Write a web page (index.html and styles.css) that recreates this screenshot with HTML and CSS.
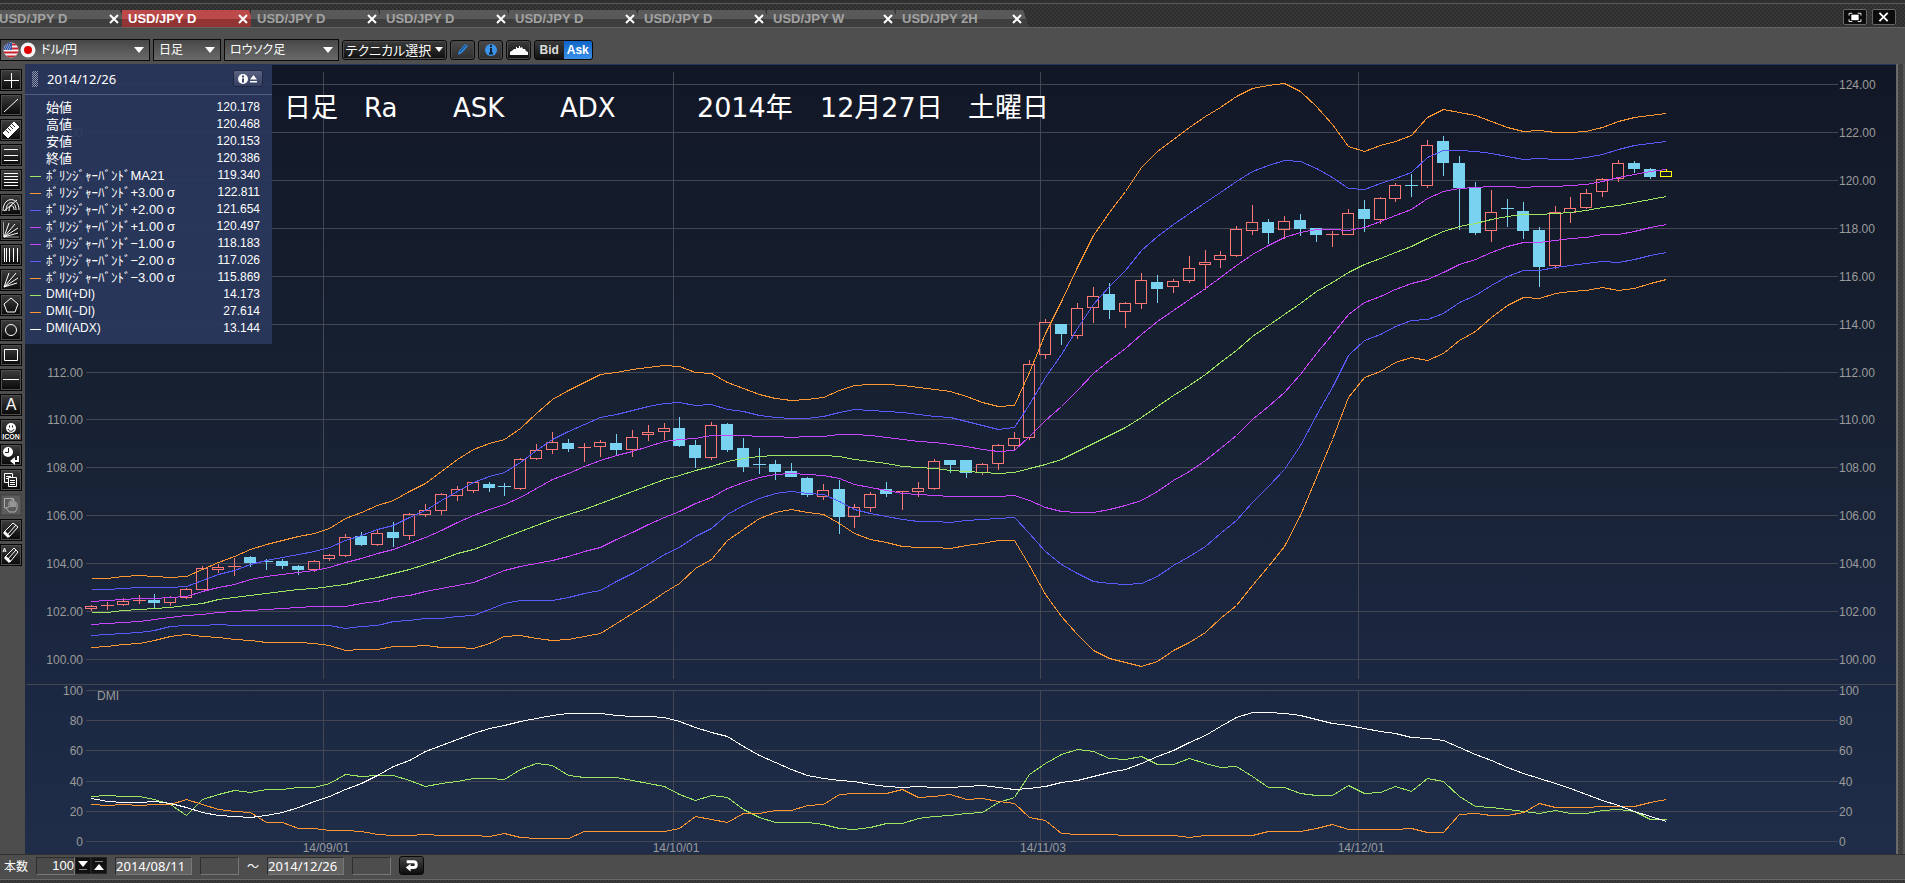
FILE: index.html
```
<!DOCTYPE html>
<html lang="ja">
<head>
  <meta charset="UTF-8">
  <meta name="viewport" content="width=device-width, initial-scale=1.0">
  <title>USD/JPY D</title>
  <link rel="stylesheet" href="styles.css">
</head>
<body>
  <div class="frame-top"></div>
  <header class="tab-bar">
    <ul class="tabs">
      <li class="tab"><button class="tab-name">USD/JPY D</button><button class="tab-close" aria-label="閉じる"><svg viewBox="0 0 10 10"><path d="M1 1l8 8M9 1l-8 8"/></svg></button></li>
      <li class="tab active"><button class="tab-name">USD/JPY D</button><button class="tab-close" aria-label="閉じる"><svg viewBox="0 0 10 10"><path d="M1 1l8 8M9 1l-8 8"/></svg></button></li>
      <li class="tab"><button class="tab-name">USD/JPY D</button><button class="tab-close" aria-label="閉じる"><svg viewBox="0 0 10 10"><path d="M1 1l8 8M9 1l-8 8"/></svg></button></li>
      <li class="tab"><button class="tab-name">USD/JPY D</button><button class="tab-close" aria-label="閉じる"><svg viewBox="0 0 10 10"><path d="M1 1l8 8M9 1l-8 8"/></svg></button></li>
      <li class="tab"><button class="tab-name">USD/JPY D</button><button class="tab-close" aria-label="閉じる"><svg viewBox="0 0 10 10"><path d="M1 1l8 8M9 1l-8 8"/></svg></button></li>
      <li class="tab"><button class="tab-name">USD/JPY D</button><button class="tab-close" aria-label="閉じる"><svg viewBox="0 0 10 10"><path d="M1 1l8 8M9 1l-8 8"/></svg></button></li>
      <li class="tab"><button class="tab-name">USD/JPY W</button><button class="tab-close" aria-label="閉じる"><svg viewBox="0 0 10 10"><path d="M1 1l8 8M9 1l-8 8"/></svg></button></li>
      <li class="tab"><button class="tab-name">USD/JPY 2H</button><button class="tab-close" aria-label="閉じる"><svg viewBox="0 0 10 10"><path d="M1 1l8 8M9 1l-8 8"/></svg></button></li>
    </ul>
    <div class="window-buttons">
      <button aria-label="最大化"><svg viewBox="0 0 24 14"><path d="M5.500 5V2.500H9M15 2.500h3.500V5M18.500 9v2.500H15M9 11.500H5.500V9" fill="none" stroke="#fff"/><rect x="8" y="4" width="8" height="6" fill="#fff"/></svg></button>
      <button aria-label="閉じる"><svg viewBox="0 0 24 14"><path d="M7 2l9 9M16 2l-9 9" stroke="#fff" stroke-width="2"/></svg></button>
    </div>
  </header>

  <div class="toolbar">
    <div class="select-box pair">
      <svg class="flags" viewBox="0 0 34 16">
        <clipPath id="us"><circle cx="8" cy="8" r="7.500"/></clipPath>
        <g clip-path="url(#us)">
          <path d="M0 0h16v16H0z" fill="#f3f3f3"/>
          <path d="M0 2.500h16M0 6.500h16M0 10.500h16M0 14.500h16" stroke="#c8202c" stroke-width="2"/>
          <path d="M0 0h9v8H0z" fill="#3a5ba5"/>
          <path d="M2 3h6M1 5h7M2 7h6" stroke="#b8c8ea" stroke-dasharray="1 1"/>
        </g>
        <circle cx="25" cy="8" r="7.500" fill="#f3f3f3"/>
        <circle cx="25" cy="8" r="4" fill="#e00000"/>
      </svg>
      <select aria-label="通貨ペア"><option>ドル/円</option></select>
      <svg class="arrow" viewBox="0 0 10 6"><path d="M0 0h10L5 6z"/></svg>
    </div>
    <div class="select-box term">
      <select aria-label="足種"><option>日足</option></select>
      <svg class="arrow" viewBox="0 0 10 6"><path d="M0 0h10L5 6z"/></svg>
    </div>
    <div class="select-box style">
      <select aria-label="チャート種類"><option>ロウソク足</option></select>
      <svg class="arrow" viewBox="0 0 10 6"><path d="M0 0h10L5 6z"/></svg>
    </div>
    <button class="tool technical">テクニカル選択<svg viewBox="0 0 8 5"><path d="M0 0h8L4 5z" fill="#fff"/></svg></button>
    <button class="tool icon gray" aria-label="描画"><svg viewBox="0 0 20 16"><path d="M5 13l1-4 6-7 3 2-6 7z" fill="#2f86d8"/><path d="M7 10l6-7" stroke="#0d3c70"/></svg></button>
    <button class="tool icon gray" aria-label="情報"><svg viewBox="0 0 20 16"><circle cx="10" cy="8" r="6" fill="#3b94ea"/><path d="M10 3v2M9 7h1v4M8 11.500h4" stroke="#123" stroke-width="2" fill="none"/></svg></button>
    <button class="tool icon" aria-label="出来高"><svg viewBox="0 0 20 16"><path d="M1 13v-3l3-2 1-1h2V5h1v1h2V4h1v2l2-1 1 2h2l1 2 2 1v3z" fill="#fff"/></svg></button>
    <div class="rate-switch">
      <button>Bid</button><button class="on">Ask</button>
    </div>
  </div>

  <main class="workspace">
    <aside class="draw-tools">
      <button aria-label="十字"><svg viewBox="0 0 20 20"><path d="M10.500 3v15M3 10.500h15"/></svg></button>
      <button aria-label="直線"><svg viewBox="0 0 20 20"><path d="M3 17L17 4"/></svg></button>
      <button aria-label="定規"><svg viewBox="0 0 20 20"><path d="M2 13L13 2l5 5L7 18z" fill="#fff"/><path d="M5 10l3 3M7 8l3 3M9 6l3 3M11 4l3 3" stroke="#333"/></svg></button>
      <button aria-label="平行線"><svg viewBox="0 0 20 20"><path d="M3 4.500h14M3 10.500h14M3 15.500h14"/></svg></button>
      <button aria-label="フィボナッチ"><svg viewBox="0 0 20 20"><path d="M3 3.500h14M3 6.500h14M3 9.500h14M3 12.500h14M3 15.500h14"/></svg></button>
      <button aria-label="アーク"><svg viewBox="0 0 20 20"><path d="M2 16C2 1 18 1 18 15M5 16C5 5 15 5 15 15M8 16c0-7 5-7 5-1M3 16L16 5"/></svg></button>
      <button aria-label="ファン"><svg viewBox="0 0 20 20"><path d="M2.500 2v15H18" stroke="#aaa"/><path d="M3 17L8 3M3 17L14 4M3 17L17 8M3 17l14-4"/></svg></button>
      <button aria-label="タイムゾーン"><svg viewBox="0 0 20 20"><path d="M3.500 3v14M5.500 3v14M8.500 3v14M12.500 3v14M16.500 3v14"/></svg></button>
      <button aria-label="角度線"><svg viewBox="0 0 20 20"><path d="M3 17L8 3M3 17L15 3M3 17L17 8M3 17l13-4"/></svg></button>
      <button aria-label="多角形"><svg viewBox="0 0 20 20"><path d="M10 3l7 6-3 8H6L3 9z"/></svg></button>
      <button aria-label="円"><svg viewBox="0 0 20 20"><circle cx="10" cy="10" r="5.500"/></svg></button>
      <button aria-label="四角"><svg viewBox="0 0 20 20"><path d="M3.500 4.500h13v11h-13z"/></svg></button>
      <button aria-label="水平線"><svg viewBox="0 0 20 20"><path d="M2 9.500h16"/></svg></button>
      <button class="letter" aria-label="文字">A</button>
      <button class="stamp" aria-label="アイコン"><svg viewBox="0 0 20 12"><circle cx="10" cy="7" r="5" fill="#fff" stroke="none"/><path d="M8.500 4.500v2M11.500 4.500v2M7 8c1 3 5 3 6 0" stroke="#222"/></svg><span>ICON</span></button>
      <button aria-label="時間"><svg viewBox="0 0 20 20"><circle cx="7" cy="7" r="5" fill="#fff" stroke="none"/><path d="M7.500 3v4.500H4" stroke="#222"/><path d="M17 11v5h-5" stroke-width="2"/><path d="M14 12v8l-5-4z" fill="#fff" stroke="none"/></svg></button>
      <button aria-label="コピー"><svg viewBox="0 0 20 20"><path d="M7 12.500H3.500v-9h8V7M5 6.500h5M5 8.500h3M7.500 7.500h8v9h-8zM9 10.500h5M9 12.500h5M9 14.500h5"/></svg></button>
      <button class="disabled" aria-label="移動"><svg viewBox="0 0 20 20"><path d="M6 13H3.500V3.500h9V6M8 17l-3-4 3-1V8c0-2 2-2 2 0v4-6c0-2 2-2 2 0v6-5c0-2 2-2 2 0v5-3c0-2 2-2 2 0v5l-2 3z"/></svg></button>
      <button aria-label="消去"><svg viewBox="0 0 20 20"><path d="M3 12l9-9 5 4-9 10zM15 5l-8 9"/><path d="M3 12l5 5" stroke-width="3"/></svg></button>
      <button aria-label="全消去"><svg viewBox="0 0 20 20"><path d="M4 12l9-9 4 4-8 10zM15 5l-8 9M2 7l1.500-4L5 7M2.500 6h2"/><path d="M4 12l5 5" stroke-width="3"/></svg></button>
    </aside>

    <section class="chart">
      <svg id="chart"></svg>
      <div class="info-panel">
        <div class="info-head">
          <span class="grip"></span>
          <span class="info-date">2014/12/26</span>
          <button aria-label="情報を閉じる"><svg viewBox="0 0 24 12"><circle cx="7" cy="6" r="5" fill="#fff"/><path d="M7 2.500v2M7 5.500v4" stroke="#3b4668" stroke-width="2"/><path d="M14 6.500h7L17.500 2zM14 8h7v1.500h-7z" fill="#fff"/></svg></button>
        </div>
        <table>
          <tr><td></td><th>始値</th><td>120.178</td></tr>
          <tr><td></td><th>高値</th><td>120.468</td></tr>
          <tr><td></td><th>安値</th><td>120.153</td></tr>
          <tr><td></td><th>終値</th><td>120.386</td></tr>
          <tr><td><i class="key green"></i></td><th>ﾎﾞﾘﾝｼﾞｬｰﾊﾞﾝﾄﾞMA21</th><td>119.340</td></tr>
          <tr><td><i class="key orange"></i></td><th>ﾎﾞﾘﾝｼﾞｬｰﾊﾞﾝﾄﾞ+3.00 σ</th><td>122.811</td></tr>
          <tr><td><i class="key blue"></i></td><th>ﾎﾞﾘﾝｼﾞｬｰﾊﾞﾝﾄﾞ+2.00 σ</th><td>121.654</td></tr>
          <tr><td><i class="key purple"></i></td><th>ﾎﾞﾘﾝｼﾞｬｰﾊﾞﾝﾄﾞ+1.00 σ</th><td>120.497</td></tr>
          <tr><td><i class="key purple"></i></td><th>ﾎﾞﾘﾝｼﾞｬｰﾊﾞﾝﾄﾞ−1.00 σ</th><td>118.183</td></tr>
          <tr><td><i class="key blue"></i></td><th>ﾎﾞﾘﾝｼﾞｬｰﾊﾞﾝﾄﾞ−2.00 σ</th><td>117.026</td></tr>
          <tr><td><i class="key orange"></i></td><th>ﾎﾞﾘﾝｼﾞｬｰﾊﾞﾝﾄﾞ−3.00 σ</th><td>115.869</td></tr>
          <tr class="dmi"><td><i class="key green"></i></td><th>DMI(+DI)</th><td>14.173</td></tr>
          <tr class="dmi"><td><i class="key orange"></i></td><th>DMI(−DI)</th><td>27.614</td></tr>
          <tr class="dmi"><td><i class="key white"></i></td><th>DMI(ADX)</th><td>13.144</td></tr>
        </table>
      </div>
    </section>
    <div class="frame-right"></div>
  </main>

  <footer class="range-bar">
    <label for="count">本数</label>
    <div class="counter">
      <input type="text" id="count" value="100">
      <button aria-label="減らす"><svg viewBox="0 0 14 14"><path d="M2 3h10L7 9z" fill="#fff"/><path d="M3 11.500h8" stroke="#888"/></svg></button>
      <button aria-label="増やす"><svg viewBox="0 0 14 14"><path d="M2 12h10L7 6z" fill="#fff"/><path d="M3 3.500h8" stroke="#888"/></svg></button>
    </div>
    <input class="date" type="text" aria-label="開始日" value="2014/08/11">
    <input class="time" type="text" aria-label="開始時刻" disabled>
    <span class="wave">～</span>
    <input class="date" type="text" aria-label="終了日" value="2014/12/26">
    <input class="time" type="text" aria-label="終了時刻" disabled>
    <button class="apply" aria-label="適用"><svg viewBox="0 0 24 18"><path d="M7 5h7c4 0 4 6 0 6h-4" fill="none" stroke="#fff" stroke-width="3"/><path d="M11 7v8l-5-4z" fill="#fff"/></svg></button>
  </footer>
  <div class="frame-bottom"></div>

  <script src="chart.js"></script>
</body>
</html>
```
FILE: styles.css
```
* { margin: 0; padding: 0; box-sizing: border-box; }
body {
  display: flex;
  flex-direction: column;
  height: 100vh;
  overflow: hidden;
  background: #4d4d4d;
  color: #fff;
  font-family: "Liberation Sans", "Noto Sans CJK JP", sans-serif;
  font-size: 13px;
}
button, input, select {
  font: inherit;
  color: inherit;
  border: none;
  background: none;
  outline: none;
}
button { cursor: pointer; }
svg { display: block; }

/* ウィンドウ枠 */
.frame-top {
  height: 4px;
  background: #303030;
  border-bottom: 1px solid #5a5a5a;
}
.frame-bottom {
  height: 4px;
  border-top: 1px solid #686868;
  background: repeating-conic-gradient(#303030 0 25%, #3c3c3c 0 50%) 0 0 / 4px 4px;
}
.frame-right {
  width: 9px;
  border-left: 2px solid #6a6a6a;
  border-right: 2px solid #555;
  background: repeating-conic-gradient(#3a3a3a 0 25%, #474747 0 50%) 0 0 / 4px 4px;
}

/* タブ */
.tab-bar {
  display: flex;
  justify-content: space-between;
  align-items: flex-end;
  height: 24px;
  padding-right: 9px;
  border-bottom: 1px solid #626262;
  background: repeating-conic-gradient(#2d2d2d 0 25%, #383838 0 50%) 0 0 / 4px 4px;
}
.tabs {
  display: flex;
  list-style: none;
  margin-left: -7px;
}
.tab {
  display: flex;
  align-items: center;
  justify-content: space-between;
  width: 133px;
  height: 17px;
  margin-right: -4px;
  padding: 1px 7px 0 6px;
  background: linear-gradient(#595959 0 50%, #3e3e3e 50%);
  color: #a2a2a2;
  clip-path: polygon(0 0, 127px 0, 133px 100%, 0 100%);
}
.tab.active {
  position: relative;
  background: linear-gradient(#bd4a4a 0 50%, #933434 50%);
  color: #fff;
}
.tab-name { font-weight: bold; line-height: 16px; }
.tab-close { width: 10px; height: 10px; }
.tab-close svg { width: 10px; height: 10px; stroke: #fff; stroke-width: 2; }
.window-buttons {
  display: flex;
  gap: 5px;
  padding-bottom: 2px;
}
.window-buttons button {
  width: 24px;
  height: 16px;
  border: 1px solid #666;
  border-radius: 2px;
  background: #0c0c0c;
}

/* ツールバー */
.toolbar {
  display: flex;
  align-items: center;
  gap: 3px;
  height: 36px;
  padding-bottom: 2px;
  padding-top: 9px;
  background: #4f4f4f;
  font-feature-settings: "palt";
}
.select-box {
  display: flex;
  align-items: center;
  height: 22px;
  padding: 0 5px;
  border: 1px solid #0a0a0a;
  background: linear-gradient(#474747, #6a6a6a);
}
.select-box select {
  flex: 1;
  min-width: 0;
  appearance: none;
  font-size: 12px;
  font-feature-settings: "palt";
}
.select-box option { color: #000; }
.pair { width: 150px; padding-left: 2px; }
.term { width: 68px; }
.style { width: 115px; }
.flags { width: 34px; height: 16px; margin-right: 4px; }
.arrow { width: 10px; height: 6px; fill: #fff; }
.tool {
  display: flex;
  align-items: center;
  justify-content: center;
  height: 20px;
  border: 1px solid #0a0a0a;
  border-radius: 3px;
  background: linear-gradient(#3c3c3c, #0d0d0d);
  box-shadow: inset 0 0 0 1px #4a4a4a;
}
.tool.gray { background: linear-gradient(#4a4a4a, #303030); }
.technical {
  width: 105px;
  gap: 4px;
  font-size: 13px;
  font-feature-settings: "palt";
}
.technical svg { width: 8px; height: 5px; }
.icon { width: 25px; }
.icon svg { width: 20px; height: 16px; }
.rate-switch {
  display: flex;
  width: 59px;
  height: 20px;
  border: 1px solid #0a0a0a;
  border-radius: 3px;
  overflow: hidden;
  background: linear-gradient(#3c3c3c, #111);
}
.rate-switch button {
  flex: 1;
  font-size: 12px;
  font-weight: bold;
  color: #ddd;
}
.rate-switch .on { background: linear-gradient(#0f66c8, #3b8fe8); color: #fff; }

/* 描画ツール */
.workspace {
  display: flex;
  flex: 1;
  min-height: 0;
}
.draw-tools {
  display: flex;
  flex-direction: column;
  gap: 3px;
  width: 25px;
  padding-top: 5px;
  background: #4d4d4d;
}
.draw-tools button {
  width: 22px;
  height: 22px;
  flex: none;
  border: 1px solid #050505;
  box-shadow: inset 0 0 0 1px #4e4e4e;
  background: linear-gradient(#3d3d3d, #080808);
}
.draw-tools svg { width: 20px; height: 20px; fill: none; stroke: #fff; }
.draw-tools .letter { font-size: 16px; line-height: 20px; }
.draw-tools .stamp { font-size: 7px; font-weight: bold; line-height: 7px; }
.draw-tools .stamp svg { height: 12px; }
.draw-tools .disabled { background: #5c5c5c; border-color: #444; }
.draw-tools .disabled svg { stroke: #aaa; }

/* チャート */
.chart {
  position: relative;
  flex: 1;
  min-width: 0;
  overflow: hidden;
  border-top: 1px solid #26345a;
  background: linear-gradient(#121726, #162030 38%, #1b2740 75%, #1f2d49);
}
#chart { width: 100%; height: 100%; }
.grid { stroke: #434754; shape-rendering: crispEdges; }
.line { fill: none; shape-rendering: crispEdges; }
.axis { fill: #9b9b9b; font-size: 12px; }
.note { fill: #fff; font-family: "DejaVu Sans", "Noto Sans CJK JP", sans-serif; font-size: 26px; }
.note.cjk { font-size: 27px; }

/* 情報パネル */
.info-panel {
  position: absolute;
  left: 0;
  top: 0;
  width: 247px;
  padding-bottom: 7px;
  background: rgba(42, 56, 92, 0.93);
}
.info-head {
  display: flex;
  align-items: center;
  height: 30px;
  padding: 0 9px 2px 7px;
  border-bottom: 1px solid #525c7c;
}
.grip {
  width: 6px;
  height: 16px;
  margin-right: 9px;
  background: repeating-conic-gradient(#8d95ab 0 25%, transparent 0 50%) 0 0 / 2px 2px;
}
.info-date { flex: 1; font-family: "Noto Sans", sans-serif; }
.info-head button {
  width: 30px;
  height: 17px;
  padding: 1px 2px;
  border: 1px solid #1f2843;
  border-radius: 2px;
  background: linear-gradient(#5a6380, #343f62);
}
.info-head svg { width: 24px; height: 12px; }
.info-panel table {
  width: 100%;
  margin-top: 4px;
  border-collapse: collapse;
}
.info-panel tr { height: 17px; line-height: 17px; }
.info-panel td:first-child { width: 21px; padding-left: 5px; }
.info-panel th { font-weight: normal; text-align: left; white-space: nowrap; }
.info-panel td:last-child { padding-right: 12px; text-align: right; font-size: 12px; }
.info-panel .dmi th { font-size: 12px; }
.key { display: block; width: 11px; height: 1px; margin-top: 2px; }
.green { background: #9ee561; }
.orange { background: #ff9632; }
.blue { background: #5a5aff; }
.purple { background: #c846ff; }
.white { background: #fff; }

/* 表示範囲 */
.range-bar {
  display: flex;
  align-items: center;
  gap: 8px;
  height: 25px;
  padding: 0 4px 3px;
  border-top: 1px solid #303030;
  background: #4d4d4d;
  font-size: 12px;
}
.range-bar input {
  height: 18px;
  border: 1px solid #2e2e2e;
  border-bottom-color: #777;
  border-right-color: #777;
  background: #626262;
}
.counter { display: flex; height: 18px; }
.counter input { width: 39px; text-align: right; background: #4a4a4a; font-size: 13px; }
.counter button { width: 16px; height: 17px; border: 1px solid #222; background: #111; }
.range-bar .date { width: 77px; font-family: "Noto Sans", sans-serif; font-size: 13px; }
.range-bar .time { width: 39px; background: #4d4d4d; }
.wave { width: 12px; }
.apply {
  width: 25px;
  height: 19px;
  border: 1px solid #0a0a0a;
  border-radius: 3px;
  background: linear-gradient(#444, #0d0d0d);
}
```
FILE: chart.js
```
// 座標は基準サイズ (1871 x 790) で持ち、表示サイズに合わせて伸縮する
var BASE = { x: 25, y: 64, w: 1871, h: 790 };
var FIRST_X = 91.3, STEP_X = 15.91;

// 移動平均(21)と +3σ
var ma = [612.3,611.7,610.3,609.3,608.3,606.7,605.3,602.7,599.3,597.3,594.7,592.7,590.7,589.3,588,586.3,583.7,580.3,576.7,573,
  568.7,564,559,553.3,548.7,542.7,537.3,531.3,525.3,519.3,514.3,508.7,503.3,497.3,491.3,485,478.7,474.7,470.3,465.7,
  461.3,458.3,456.3,455.3,454.7,455.3,455.3,456.3,459,461.3,463.3,465.7,467.3,468.3,469.7,470.7,472.3,473.3,472.3,468.3,
  463.7,458.7,450.7,442.7,434.7,426.7,416.7,406,394.7,384.7,373.7,362.3,350.3,336.3,325.3,314.3,303,291.3,281.7,271.7,
  264.3,258.3,251.7,245.7,238.3,231.3,225.7,223,219,216,214.3,214.3,212.7,211.7,210.3,207.3,205.3,202.3,199,196.3];
var upper = [577.7,577.7,576.3,575.3,576.3,577.3,576.3,569,562,556,549,543.7,539.7,536.3,532.7,527.7,517.7,512,504.7,500.3,
  491.3,482.7,470.7,459.3,449,442.7,438.7,427.7,412.7,398.5,389.7,381.7,373.7,371.7,369.3,366.7,365.3,366.3,372.3,372.7,
  382.3,388,394.3,398.3,400.3,398.7,397,390,384.7,383.7,384.3,385.3,387.3,389.3,391.3,396.3,402,406.3,405,372,
  333.3,301,267.3,235,211.7,191,167.3,150.7,139.3,127.3,115.7,106.7,95.7,88,84.7,82.7,90.7,105.7,124,146.3,
  151.3,145.3,141,134.7,116.7,109.3,111.7,115.3,120.7,126.7,131.3,130.3,132,132.3,130.7,127.3,120.7,116.7,114.7,113.3];

// DMI
var plusDI = [796,795,796,796,799,804,815,799,794,790,792,789,789,787,787,783,774,776,775,775,780,786,783,781,778,778,779,769,763,765,
  775,777,777,777,780,783,786,794,800,795,797,809,817,822,822,822,824,828,829,827,823,823,818,816,815,813,812,802,797,774,
  763,754,749,751,758,759,756,764,764,758,763,767,766,776,787,787,793,795,795,785,793,792,786,791,778,781,796,806,807,809,
  811,813,810,813,813,810,809,811,819,819];
var minusDI = [804,805,804,805,804,804,799,804,809,811,812,822,822,828,828,830,830,831,834,835,835,834,835,835,835,836,833,837,838,838,
  838,831,831,831,831,831,831,828,816,819,822,813,813,810,810,805,804,794,793,793,793,789,797,796,794,799,798,801,803,817,
  820,833,834,834,834,835,835,835,835,837,835,835,835,835,831,831,831,828,824,829,829,829,829,828,832,832,814,813,815,815,
  812,803,807,807,807,806,806,806,802,799];
var adx = [798,801,802,802,801,803,807,812,815,816,817,815,812,807,801,796,789,783,775,766,760,751,745,739,733,728,725,721,718,715,
  713,713,713,715,716,716,717,721,727,732,736,746,755,762,769,775,778,780,781,784,786,787,786,787,787,786,785,787,789,788,
  786,782,780,776,772,769,763,756,750,742,735,726,717,712,712,713,715,719,723,725,728,731,733,737,738,740,747,754,760,767,
  773,778,783,788,794,800,805,811,816,821];

// ローソク足: [陽線=1/陰線=0, 実体上, 実体下, 高値, 安値]
var candles = [
  [1,606,609,605,611],[1,605,606,602,610],[1,601,605,598,606],[1,600,601,595,604],[0,600,603,594,608],
  [1,597,603,596,606],[1,589,598,588,599],[1,568,590,566,590],[1,567,570,564,573],[1,566,567,558,576],
  [0,557,563,556,567],[0,561,562,559,570],[0,561,566,559,569],[0,566,570,565,575],[1,561,570,560,572],
  [1,555,559,554,561],[1,537,556,534,557],[0,536,545,532,546],[1,533,545,530,546],[0,532,538,522,547],
  [1,514,536,513,540],[1,510,515,504,517],[1,494,511,493,515],[1,489,496,486,501],[1,482,491,482,493],
  [0,484,488,482,492],[0,486,487,483,496],[1,459,489,458,490],[1,450,459,444,460],[1,442,450,432,454],
  [0,443,449,439,452],[1,447,448,443,462],[1,442,447,440,457],[0,443,450,434,455],[1,437,450,430,457],
  [1,432,435,425,441],[1,428,432,423,440],[0,428,446,417,447],[0,445,458,440,468],[1,425,458,422,460],
  [0,424,450,423,452],[0,448,467,438,472],[0,464,465,448,474],[0,464,472,460,480],[0,471,477,463,477],
  [0,478,495,477,497],[1,490,497,484,500],[0,489,517,480,534],[1,507,517,504,528],[1,494,508,492,512],
  [0,489,494,482,497],[1,491,492,491,510],[1,488,492,482,497],[1,461,489,459,490],[0,460,465,460,473],
  [0,460,473,460,478],[1,464,473,463,475],[1,445,464,444,470],[1,438,446,432,450],[1,364,438,360,440],
  [1,322,355,319,359],[0,324,334,324,345],[1,308,336,303,339],[1,296,308,287,323],[0,294,310,283,319],
  [1,303,312,302,328],[1,280,304,273,309],[0,282,289,275,303],[1,281,287,279,293],[1,268,281,256,283],
  [1,262,265,250,290],[1,255,260,251,268],[1,229,256,226,257],[1,222,231,205,235],[0,222,233,219,244],
  [1,221,230,216,239],[0,220,229,214,236],[0,228,235,228,242],[1,234,235,231,247],[1,213,235,209,235],
  [0,209,219,200,232],[1,198,220,197,224],[1,185,199,183,202],[0,185,186,174,197],[1,145,186,140,188],
  [0,141,163,136,176],[0,163,188,156,230],[0,187,233,182,235],[1,212,231,190,242],[0,208,209,199,227],
  [0,211,231,202,239],[0,230,267,227,287],[1,212,266,206,269],[1,208,213,197,223],[1,193,208,189,209],
  [1,179,192,178,197],[1,163,179,160,182],[0,163,169,161,173],[0,169,177,168,179],[1,171,177,169,177]
];

var dates = [[323, '14/09/01'], [673, '14/10/01'], [1040, '14/11/03'], [1358, '14/12/01']];
var notes = [[284, '日足', 1], [364, 'Ra'], [453, 'ASK'], [560, 'ADX'], [697, '2014年', 1], [820, '12月27日', 1], [968, '土曜日', 1]];

var svg = document.getElementById('chart');

function add(name, attrs, text) {
  var el = document.createElementNS('http://www.w3.org/2000/svg', name);
  for (var key in attrs) { el.setAttribute(key, attrs[key]); }
  if (text) { el.textContent = text; }
  svg.appendChild(el);
}

function draw() {
  var box = svg.parentNode.getBoundingClientRect();
  var kx = box.width / BASE.w;
  var ky = box.height / BASE.h;
  function X(v) { return Math.floor((v - BASE.x) * kx); }
  // 上枠 1px を差し引く
  function Y(v) { return Math.round((v - BASE.y) * ky) - 1; }

  function rule(x1, y1, x2, y2) {
    add('line', { x1: x1 + 0.5, y1: y1 + 0.5, x2: x2 + 0.5, y2: y2 + 0.5, 'class': 'grid' });
  }
  function series(values, color) {
    var points = values.map(function(v, i) {
      return (X(FIRST_X + STEP_X * i) + 0.5) + ',' + (Y(v) + 0.5);
    });
    add('polyline', { points: points.join(' '), stroke: color, 'class': 'line' });
  }

  svg.innerHTML = '';
  var left = X(85), right = X(1837);

  // 価格の目盛り
  for (var p = 124; p >= 100; p -= 2) {
    var y = Y(84 + (124 - p) * 23.96);
    rule(left, y, right, y);
    add('text', { x: X(83), y: y + 5, 'text-anchor': 'end', 'class': 'axis' }, p.toFixed(2));
    add('text', { x: X(1839), y: y + 5, 'class': 'axis' }, p.toFixed(2));
  }
  // DMI の目盛り
  for (var d = 100; d >= 0; d -= 20) {
    var dy = Y(690 + (100 - d) * 1.51);
    rule(left, dy, right, dy);
    add('text', { x: X(83), y: dy + 5, 'text-anchor': 'end', 'class': 'axis' }, String(d));
    add('text', { x: X(1839), y: dy + 5, 'class': 'axis' }, String(d));
  }
  rule(0, Y(684), box.width, Y(684));
  dates.forEach(function(item) {
    var x = X(item[0]);
    rule(x, Y(71), x, Y(678));
    rule(x, Y(690), x, Y(841));
    add('text', { x: x + 3, y: Y(852), 'text-anchor': 'middle', 'class': 'axis' }, item[1]);
  });
  add('text', { x: X(97), y: Y(700), 'class': 'axis' }, 'DMI');
  notes.forEach(function(item) {
    add('text', { x: X(item[0]), y: Y(117), 'class': item[2] ? 'note cjk' : 'note' }, item[1]);
  });

  // ローソク足
  candles.forEach(function(c, i) {
    var x = X(FIRST_X + STEP_X * i);
    var top = Y(c[1]), bottom = Y(c[2]), high = Y(c[3]), low = Y(c[4]);
    var color = c[0] ? '#ff7878' : '#78d2f0';
    if (i === candles.length - 1) { color = '#ffff00'; }
    if (high < top) { add('rect', { x: x, y: high, width: 1, height: top - high, fill: color }); }
    if (low > bottom) { add('rect', { x: x, y: bottom, width: 1, height: low - bottom, fill: color }); }
    if (bottom - top <= 1) {
      add('rect', { x: x - 6, y: top, width: 13, height: 1, fill: color });
    } else if (c[0]) {
      add('rect', { x: x - 5.5, y: top + 0.5, width: 11, height: bottom - top - 1, fill: 'none', stroke: color });
    } else {
      add('rect', { x: x - 6, y: top, width: 12, height: bottom - top, fill: color });
    }
  });

  // ボリンジャーバンド
  var bandColors = { 1: '#c846ff', 2: '#5a5aff', 3: '#ff9632' };
  [3, 2, 1, -1, -2, -3].forEach(function(k) {
    series(ma.map(function(m, i) { return m + (upper[i] - m) * k / 3; }), bandColors[Math.abs(k)]);
  });
  series(ma, '#9ee561');

  series(plusDI, '#9ee561');
  series(minusDI, '#ff9632');
  series(adx, '#ffffff');
}

draw();
window.addEventListener('resize', draw);
```
